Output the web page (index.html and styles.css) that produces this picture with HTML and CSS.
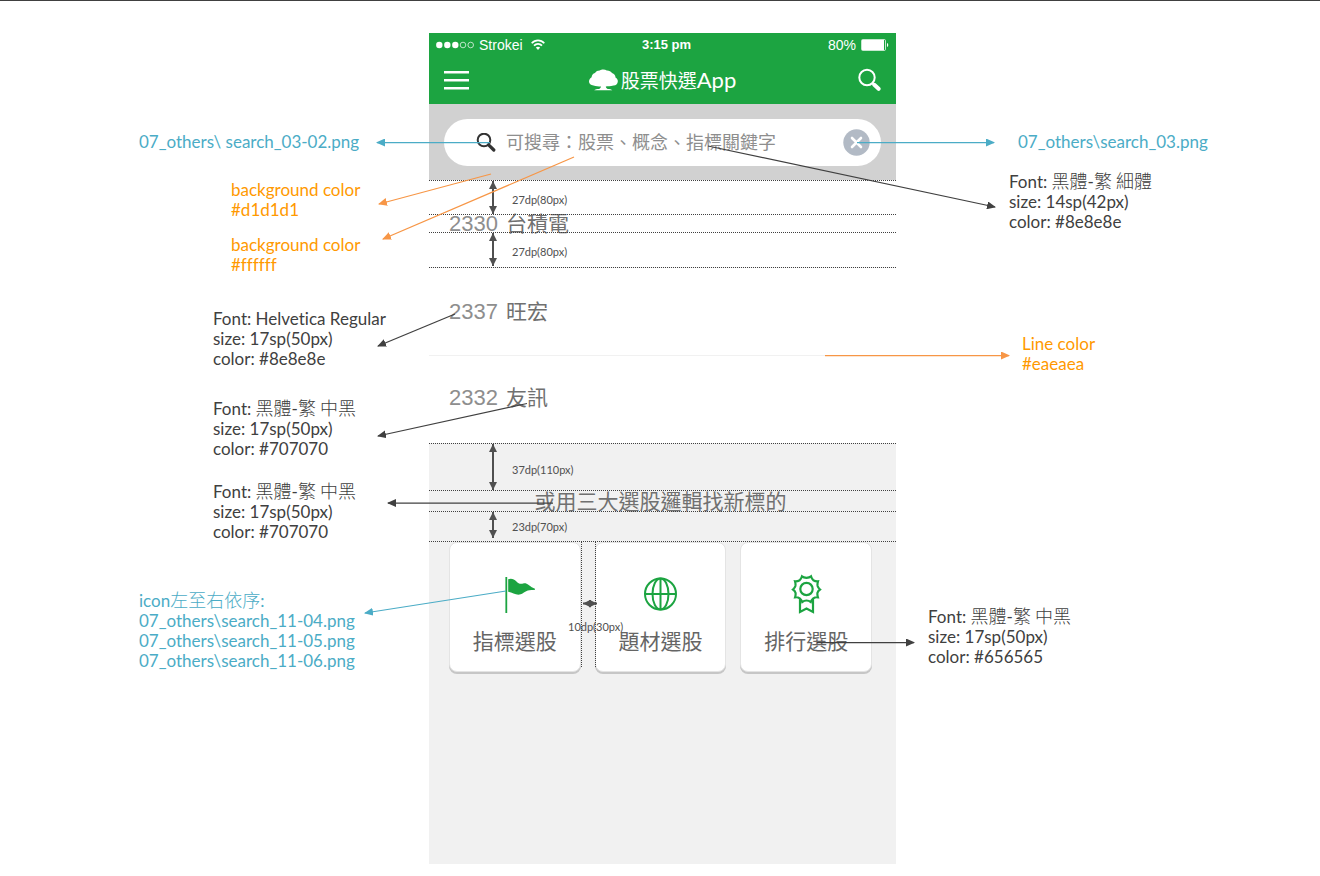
FILE: index.html
```html
<!DOCTYPE html>
<html lang="zh-Hant">
<head>
<meta charset="utf-8">
<meta name="viewport" content="width=device-width, initial-scale=1">
<title>股票快選App</title>
<link rel="stylesheet" href="styles.css">
</head>
<body>
<main class="sheet">
  <aside class="notes notes-left">
    <p class="note asset wide">07_others\ search_03-02.png</p>
    <p class="note fill narrow gap-28">background color<br>#d1d1d1</p>
    <p class="note fill narrow gap-15">background color<br>#ffffff</p>
    <p class="note mid gap-34">Font: Helvetica Regular<br>size: 17sp(50px)<br>color: #8e8e8e</p>
    <p class="note mid gap-30">Font: <span class="han">黑體</span>-<span class="han">繁 中黑</span><br>size: 17sp(50px)<br>color: #707070</p>
    <p class="note mid gap-23">Font: <span class="han">黑體</span>-<span class="han">繁 中黑</span><br>size: 17sp(50px)<br>color: #707070</p>
    <p class="note asset wide gap-49">icon<span class="han">左至右依序</span>:<br>07_others\search_11-04.png<br>07_others\search_11-05.png<br>07_others\search_11-06.png</p>
  </aside>

  <section class="phone">
    <header class="top">
      <div class="status">
        <div class="carrier">
          <svg width="38" height="8" viewBox="0 0 38 8" aria-hidden="true">
            <g fill="#fff"><circle cx="3.300" cy="4" r="3.200"/><circle cx="11.300" cy="4" r="3.200"/><circle cx="19.300" cy="4" r="3.200"/></g>
            <g fill="none" stroke="#fff" stroke-width=".7"><circle cx="27" cy="4" r="2.800"/><circle cx="34.700" cy="4" r="2.800"/></g>
          </svg>
          <span>Strokei</span>
          <svg class="wifi" width="14" height="11" viewBox="0 0 14 11" aria-hidden="true">
            <g fill="none" stroke="#fff" stroke-width="1.700"><path d="M.7 4.200C4.200.3 9.800.3 13.300 4.200"/><path d="M3 6.700c2.300-2.500 5.700-2.500 8 0"/></g>
            <path d="M4.800 8.600c1.300-1.300 3.100-1.300 4.400 0L7 11z" fill="#fff"/>
          </svg>
        </div>
        <time class="clock">3:15 pm</time>
        <div class="battery">
          <span>80%</span>
          <svg width="28" height="12" viewBox="0 0 28 12" aria-hidden="true">
            <rect x=".5" y=".5" width="24" height="11" rx="1.200" fill="none" stroke="#fff" stroke-opacity=".75"/>
            <rect x="1" y="1" width="22" height="10" fill="#fff"/>
            <path d="M26 4c1.600.4 1.600 3.600 0 4z" fill="#fff"/>
          </svg>
        </div>
      </div>
      <nav class="bar">
        <button class="icon-button" type="button" aria-label="選單">
          <svg width="25" height="20" viewBox="0 0 25 20"><path d="M0 2.300h25M0 10.300h25M0 18.300h25" stroke="#fff" stroke-width="2.600"/></svg>
        </button>
        <h1 class="brand">
          <svg width="29" height="22" viewBox="0 0 29 22" aria-hidden="true">
            <path fill="#fff" d="M0 12.500C0 10.500 1.200 9 2.600 8.200 2.800 6 4 4.500 6 4 7 2.200 9 1.400 10.800 1.500 12.500.2 16 .2 17.800 1.500 20 1.400 22 2.300 23 4c2.200.6 3.500 2.400 3.500 4.500 1.500.8 2.500 2.300 2.300 4.200-.3 2.300-2 3.800-4.300 3.700-3 .7-5.700.7-7.700 1 .200 1.300.8 2.100 1.900 2.500 1.700 0 4 .4 4.600 1.300H5.200c.7-1 3.200-1.300 4.900-1.300 1.100-.4 1.700-1.200 1.900-2.400-2.500-.1-5-.2-7.500-1.100C1.800 16.300 0 14.700 0 12.500z"/>
          </svg>
          <span class="brand-name">股票快選<span class="latin">App</span></span>
        </h1>
        <button class="icon-button" type="button" aria-label="搜尋">
          <svg width="25" height="24" viewBox="0 0 25 24"><circle cx="11" cy="9.500" r="7.700" fill="none" stroke="#fff" stroke-width="2"/><path d="M16.300 15l2 2" stroke="#fff" stroke-width="2"/><path d="M18.300 16.800l4.300 4" stroke="#fff" stroke-width="4" stroke-linecap="round"/></svg>
        </button>
      </nav>
    </header>

    <form class="search">
      <div class="pill">
        <label for="keyword" aria-label="搜尋關鍵字">
          <svg width="20" height="20" viewBox="0 0 20 20"><circle cx="8" cy="7" r="6.300" fill="none" stroke="#333" stroke-width="2"/><path d="M12.600 11.800l5.200 5.200" stroke="#333" stroke-width="3.200" stroke-linecap="round"/></svg>
        </label>
        <input id="keyword" type="text" placeholder="可搜尋：股票、概念、指標關鍵字">
        <button class="icon-button" type="reset" aria-label="清除">
          <svg width="27" height="27" viewBox="0 0 27 27"><circle cx="13.500" cy="13.500" r="13.200" fill="#b2bac5"/><path d="M9 9l9 9M18 9l-9 9" stroke="#fff" stroke-width="2.600" stroke-linecap="round"/></svg>
        </button>
      </div>
    </form>

    <ul class="stocks">
      <li><span class="code">2330</span><span class="name">台積電</span></li>
      <li><span class="code">2337</span><span class="name">旺宏</span></li>
      <li><span class="code">2332</span><span class="name">友訊</span></li>
    </ul>

    <section class="picks">
      <h2>或用三大選股邏輯找新標的</h2>
      <div class="cards">
        <button class="card" type="button">
          <svg width="40" height="40" viewBox="0 0 40 40" aria-hidden="true"><path d="M11.300 3v36" stroke="#1ca441" stroke-width="1.800"/><path fill="#1ca441" d="M13.200 5.200c3-1.200 6-.2 8 2 2.500 2.600 4 3 7 2.300 2-.5 3.500 0 5.500 1.500 2.500 2 5 3.300 7.800 4.300-3 .9-6 .5-8.700 1.200-3.200.8-4.500 3.400-8 4-4.200.8-7-2.300-11.600-2.800z"/></svg>
          <span>指標選股</span>
        </button>
        <button class="card" type="button">
          <svg width="40" height="40" viewBox="0 0 40 40" aria-hidden="true"><g fill="none" stroke="#1ca441" stroke-width="2"><circle cx="20.500" cy="20" r="15.500"/><ellipse cx="20.500" cy="20" rx="8" ry="15.500"/><path d="M20.500 4.500v31M5 20h31"/></g></svg>
          <span>題材選股</span>
        </button>
        <button class="card" type="button">
          <svg width="40" height="40" viewBox="0 0 40 40" aria-hidden="true"><g fill="none" stroke="#1ca441" stroke-width="2.200"><circle cx="20.500" cy="15" r="6.200"/><path d="M20.500 3.800Q23.500 3.500 25 2.300Q25.800 5 27.300 6.200Q29.500 7.500 32 7.300Q31.200 10 31.600 12Q32.200 14 34 15.500Q31.900 17 31.400 19Q31.200 21.200 31.900 23.300Q29.200 23 27.300 24.300Q25.500 25.800 24.800 28Q22.800 26.500 20.500 26.500Q18.200 26.500 16.200 28Q15.500 25.800 13.700 24.300Q11.800 23 9.100 23.300Q9.800 21.200 9.600 19Q9.100 17 7 15.500Q8.800 14 9.400 12Q9.800 10 9 7.300Q11.500 7.500 13.700 6.200Q15.200 5 16 2.300Q17.500 3.500 20.500 3.800z"/><path d="M14 25v13l6.500-3.400L27 38V25"/></g></svg>
          <span>排行選股</span>
        </button>
      </div>
    </section>

    <svg class="callouts" viewBox="429 33 467 831" aria-hidden="true">
      <defs>
        <marker id="tip-blue" markerUnits="userSpaceOnUse" markerWidth="9" markerHeight="8" refX="8" refY="4" orient="auto-start-reverse"><path d="M0 0l9 4-9 4z" fill="#4bacc6"/></marker>
        <marker id="tip-orange" markerUnits="userSpaceOnUse" markerWidth="9" markerHeight="8" refX="8" refY="4" orient="auto-start-reverse"><path d="M0 0l9 4-9 4z" fill="#f79646"/></marker>
        <marker id="tip-dark" markerUnits="userSpaceOnUse" markerWidth="9" markerHeight="8" refX="8" refY="4" orient="auto-start-reverse"><path d="M0 0l9 4-9 4z" fill="#404040"/></marker>
        <marker id="tip-size" markerUnits="userSpaceOnUse" markerWidth="8" markerHeight="8" refX="8" refY="4" orient="auto-start-reverse"><path d="M0 0l8 4-8 4z" fill="#505050"/></marker>
      </defs>
      <g class="guides">
        <path d="M429 180.500h467M429 214.500h467M429 232.500h467M429 267.500h467M429 443.500h467M429 490.500h467M429 511.500h467M429 541.500h467"/>
        <path d="M581.500 542v125M595.500 542v125"/>
      </g>
      <g class="sizes">
        <path d="M493 181v33"/><path d="M493 233v33"/><path d="M493 444v46"/><path d="M493 512v26"/><path d="M583 603.500h14"/>
      </g>
      <g class="size-labels">
        <text x="512" y="204">27dp(80px)</text>
        <text x="512" y="256">27dp(80px)</text>
        <text x="512" y="474">37dp(110px)</text>
        <text x="512" y="531">23dp(70px)</text>
        <text x="568" y="631">10dp(30px)</text>
      </g>
      <g class="leader blue"><path d="M490 142.500H377"/><path d="M857 142.500H994"/><path d="M506 591L365 613"/></g>
      <g class="leader orange"><path d="M491 174L379 204"/><path d="M574 157L383 239"/><path d="M825 355.500h184"/></g>
      <g class="leader dark"><path d="M708 146L995 207"/><path d="M455 314L378 346"/><path d="M527 403.500L378 436"/><path d="M553 503H388"/><path d="M817 642.500h97"/></g>
    </svg>
  </section>

  <aside class="notes notes-right">
    <p class="note asset in-122">07_others\search_03.png</p>
    <p class="note in-113 gap-20">Font: <span class="han">黑體</span>-<span class="han">繁 細體</span><br>size: 14sp(42px)<br>color: #8e8e8e</p>
    <p class="note fill in-126 gap-102">Line color<br>#eaeaea</p>
    <p class="note in-32 gap-233">Font: <span class="han">黑體</span>-<span class="han">繁 中黑</span><br>size: 17sp(50px)<br>color: #656565</p>
  </aside>
</main>
</body>
</html>
```

FILE: styles.css
```css
* { box-sizing: border-box; }

body {
  margin: 0;
  border-top: 1px solid #404040;
  background: #fff;
  color: #404040;
  font-family: Lato, "Noto Sans CJK TC", sans-serif;
}

h1, h2, p, ul { margin: 0; padding: 0; font-weight: 400; }
ul { list-style: none; }
svg { display: block; flex: none; }
button { font: inherit; color: inherit; cursor: pointer; }

.sheet {
  display: grid;
  grid-template-columns: 1fr 467px 1fr;
  padding: 32px 0 12px 5px;
}

/* Notes beside the phone */
.notes { display: flex; flex-direction: column; padding-top: 99px; }
.notes-left { align-items: flex-end; }
.note {
  font-size: 17px;
  font-variant-ligatures: none;
  line-height: 20px;
  white-space: nowrap;
}
.han { font-family: "Noto Sans CJK TC", sans-serif; font-size: 18px; font-weight: 300; line-height: 16px; }
.asset { color: #4bacc6; }
.fill { color: #ff9900; }
.wide { width: 290px; }
.mid { width: 216px; }
.narrow { width: 198px; }
.in-32 { margin-left: 32px; }
.in-113 { margin-left: 113px; }
.in-122 { margin-left: 122px; }
.in-126 { margin-left: 126px; }
.gap-15 { margin-top: 15px; }
.gap-20 { margin-top: 20px; }
.gap-23 { margin-top: 23px; }
.gap-28 { margin-top: 28px; }
.gap-30 { margin-top: 30px; }
.gap-34 { margin-top: 34px; }
.gap-49 { margin-top: 49px; }
.gap-102 { margin-top: 102px; }
.gap-233 { margin-top: 233px; }

/* Phone screen */
.phone {
  position: relative;
  display: flex;
  flex-direction: column;
  min-height: 831px;
  font-family: "Liberation Sans", "Noto Sans CJK TC", sans-serif;
}
.top { background: #1ca441; color: #fff; }
.status {
  display: grid;
  grid-template-columns: 1fr auto 1fr;
  align-items: center;
  height: 23px;
  padding: 0 7px;
  font-size: 14px;
}
.carrier, .battery { display: flex; align-items: center; gap: 5px; }
.battery { justify-content: flex-end; }
.wifi { margin-left: 3px; }
.clock { padding-left: 8px; font-size: 13px; font-weight: 700; }
.bar {
  display: flex;
  align-items: center;
  justify-content: space-between;
  height: 48px;
  padding: 0 15px;
}
.icon-button { padding: 0; border: 0; background: none; }
.brand { display: flex; align-items: center; gap: 3px; }
.brand-name { padding-top: 2px; font-size: 19px; line-height: 24px; }
.latin { font-family: Lato, sans-serif; font-size: 22px; }

.search { padding: 15px 15px 14px; background: #d1d1d1; }
.pill {
  display: flex;
  align-items: center;
  height: 47px;
  padding: 0 11px 0 32px;
  border-radius: 24px;
  background: #fff;
}
.pill input {
  flex: 1;
  min-width: 0;
  margin-left: 10px;
  padding: 0 0 3px;
  border: 0;
  outline: 0;
  background: none;
  color: #8e8e8e;
  font-family: "Noto Sans CJK TC", sans-serif;
  font-size: 18px;
}
.pill input::placeholder { color: #8e8e8e; opacity: 1; }

.stocks li {
  display: flex;
  align-items: baseline;
  gap: 8px;
  height: 88px;
  padding-left: 20px;
  border-bottom: 1px solid #f1f1f1;
  line-height: 88px;
}
.stocks li:last-child { height: 87px; border-bottom: 0; line-height: 84px; }
.code { color: #8e8e8e; font-size: 22px; }
.name { color: #707070; font-size: 21px; }

.picks { flex: 1; padding: 47px 24px 24px 20px; background: #f1f1f1; }
.picks h2 { color: #707070; font-size: 21px; line-height: 24px; text-align: center; }
.cards { display: grid; grid-template-columns: repeat(3, 1fr); gap: 14px; margin-top: 28px; }
.card {
  display: flex;
  flex-direction: column;
  align-items: center;
  gap: 16px;
  padding: 31px 0 17px;
  border: 1px solid #e4e4e4;
  border-radius: 8px;
  background: #fff;
  box-shadow: 0 2px 0 #c6c6c6;
  color: #656565;
  font-size: 21px;
  line-height: 24px;
}

/* Measurements and leader lines drawn over the screen */
.callouts {
  position: absolute;
  top: 0;
  left: 0;
  width: 467px;
  height: 831px;
  overflow: visible;
  pointer-events: none;
}
.guides { stroke: #404040; stroke-width: 1; stroke-dasharray: 1 1; }
.sizes { stroke: #505050; stroke-width: 2; }
.sizes path { marker-start: url(#tip-size); marker-end: url(#tip-size); }
.size-labels { fill: #505050; font-family: Lato, sans-serif; font-size: 11px; }
.leader { fill: none; stroke-width: 1.25px; }
.blue { stroke: #4bacc6; }
.blue path { marker-end: url(#tip-blue); }
.orange { stroke: #f79646; }
.orange path { marker-end: url(#tip-orange); }
.dark { stroke: #404040; }
.dark path { marker-end: url(#tip-dark); }
```
